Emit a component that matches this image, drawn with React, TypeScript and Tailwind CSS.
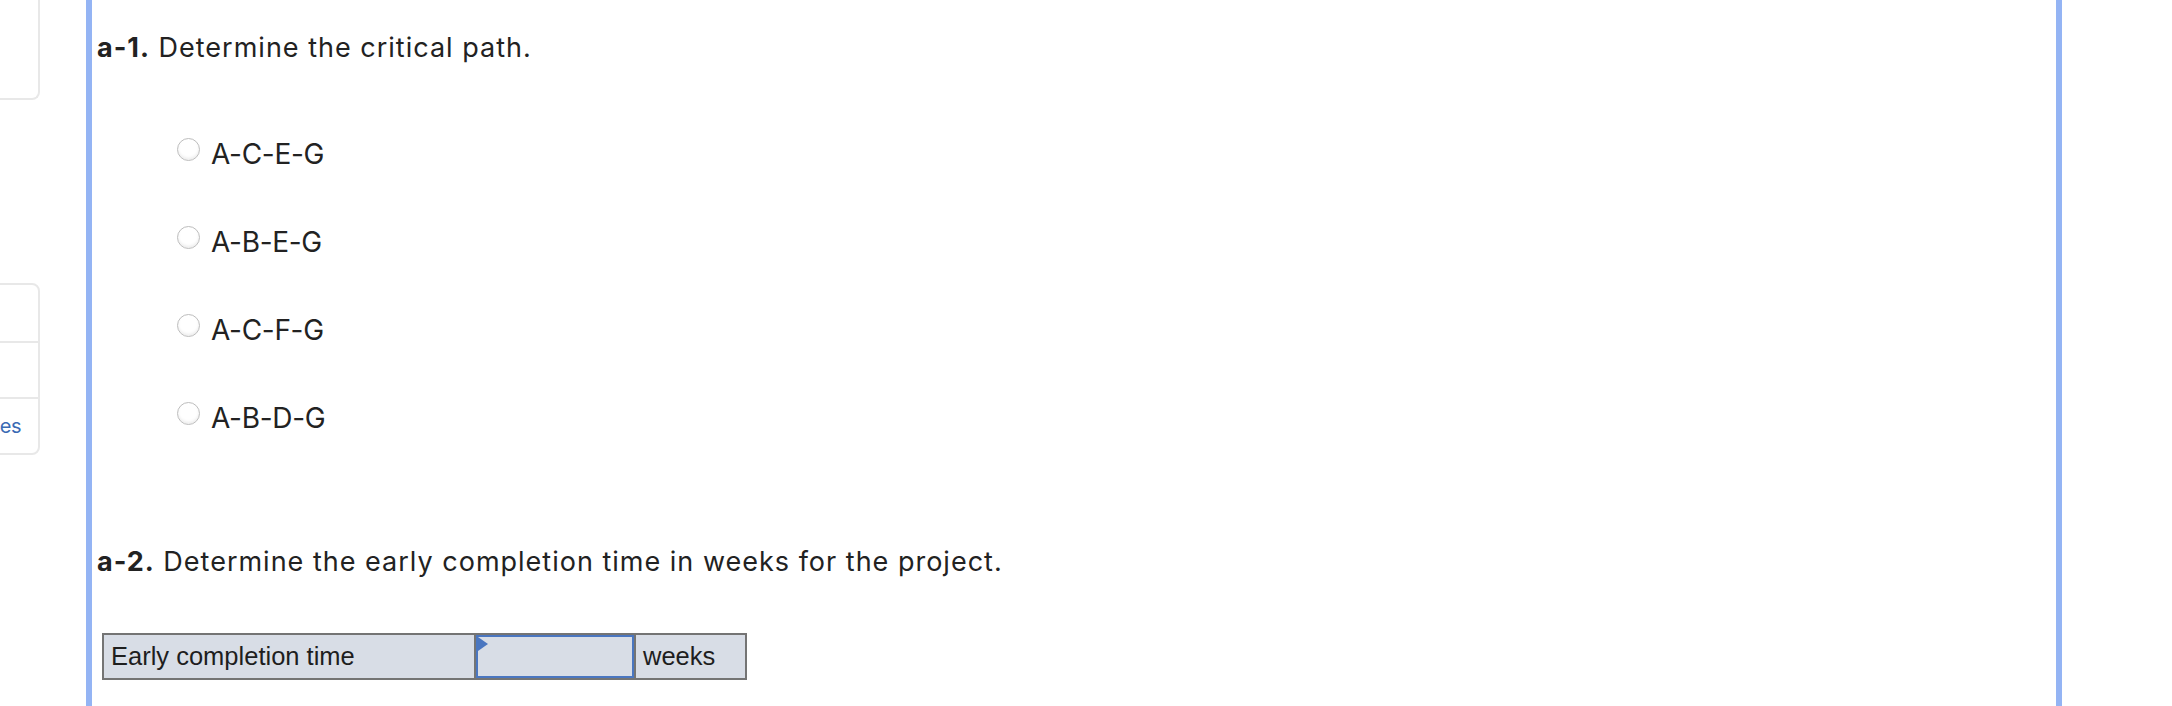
import React from "react";

const options = ["A-C-E-G", "A-B-E-G", "A-C-F-G", "A-B-D-G"];

export default function App() {
  return (
    <div className="flex h-[706px] w-[2172px] overflow-hidden bg-white text-[#222222] font-['Inter',sans-serif]">
      {/* left sidebar (cut off) */}
      <div className="flex w-[40px] shrink-0 flex-col items-end overflow-hidden">
        <div className="h-[100px] w-[200px] shrink-0 rounded-br-[8px] border-r-2 border-b-2 border-[#e8e8e8]" />
        <div className="mt-[183px] w-[200px] shrink-0 rounded-r-[8px] border-2 border-[#e8e8e8]">
          <div className="h-[58px] border-b-2 border-[#e8e8e8]" />
          <div className="h-[56px] border-b-2 border-[#e8e8e8]" />
          <div className="flex h-[54px] items-center justify-end pr-[17px] text-[20px] leading-[26px] tracking-[-0.5px] text-[#3a6ab4]">
            <span>es</span>
          </div>
        </div>
      </div>

      {/* main question panel */}
      <div className="ml-[46px] w-[1976px] shrink-0 border-x-[6px] border-[#94b4f4] pl-[5px] pt-[32px]">
        <h2 className="text-[27px] leading-[32px] tracking-[1px]">
          <span className="font-bold">a-1.</span> Determine the critical path.
        </h2>

        <div className="ml-[80px] mt-[72px] flex flex-col gap-[52px]">
          {options.map((o) => (
            <label key={o} className="flex items-start gap-[11px] text-[28px] leading-[36px] tracking-[-0.3px]">
              <span className="mt-[2px] h-[23px] w-[23px] shrink-0 rounded-full border border-[#bdbdbd] bg-white shadow-[inset_0_-2px_3px_rgba(0,0,0,0.07)]" />
              <span>{o}</span>
            </label>
          ))}
        </div>

        <h2 className="mt-[110px] text-[27px] leading-[32px] tracking-[1px]">
          <span className="font-bold">a-2.</span> Determine the early completion time in weeks for the project.
        </h2>

        <div className="ml-[5px] mt-[55px] flex h-[47px] w-[645px] border-2 border-[#747474] bg-[#d8dde6] font-['Liberation_Sans',Arial,sans-serif] text-[25.5px] text-[#1e1e1e]">
          <div className="flex w-[372px] items-center border-r-2 border-[#747474] pl-[7px]">
            Early completion time
          </div>
          <div className="relative w-[158px] border-2 border-[#4a76c0]">
            <span className="absolute left-0 top-0 h-0 w-0 border-y-[7px] border-l-[10px] border-y-transparent border-l-[#4a76c0]" />
          </div>
          <div className="flex flex-1 items-center border-l-2 border-[#747474] pl-[7px]">weeks</div>
        </div>
      </div>
    </div>
  );
}
